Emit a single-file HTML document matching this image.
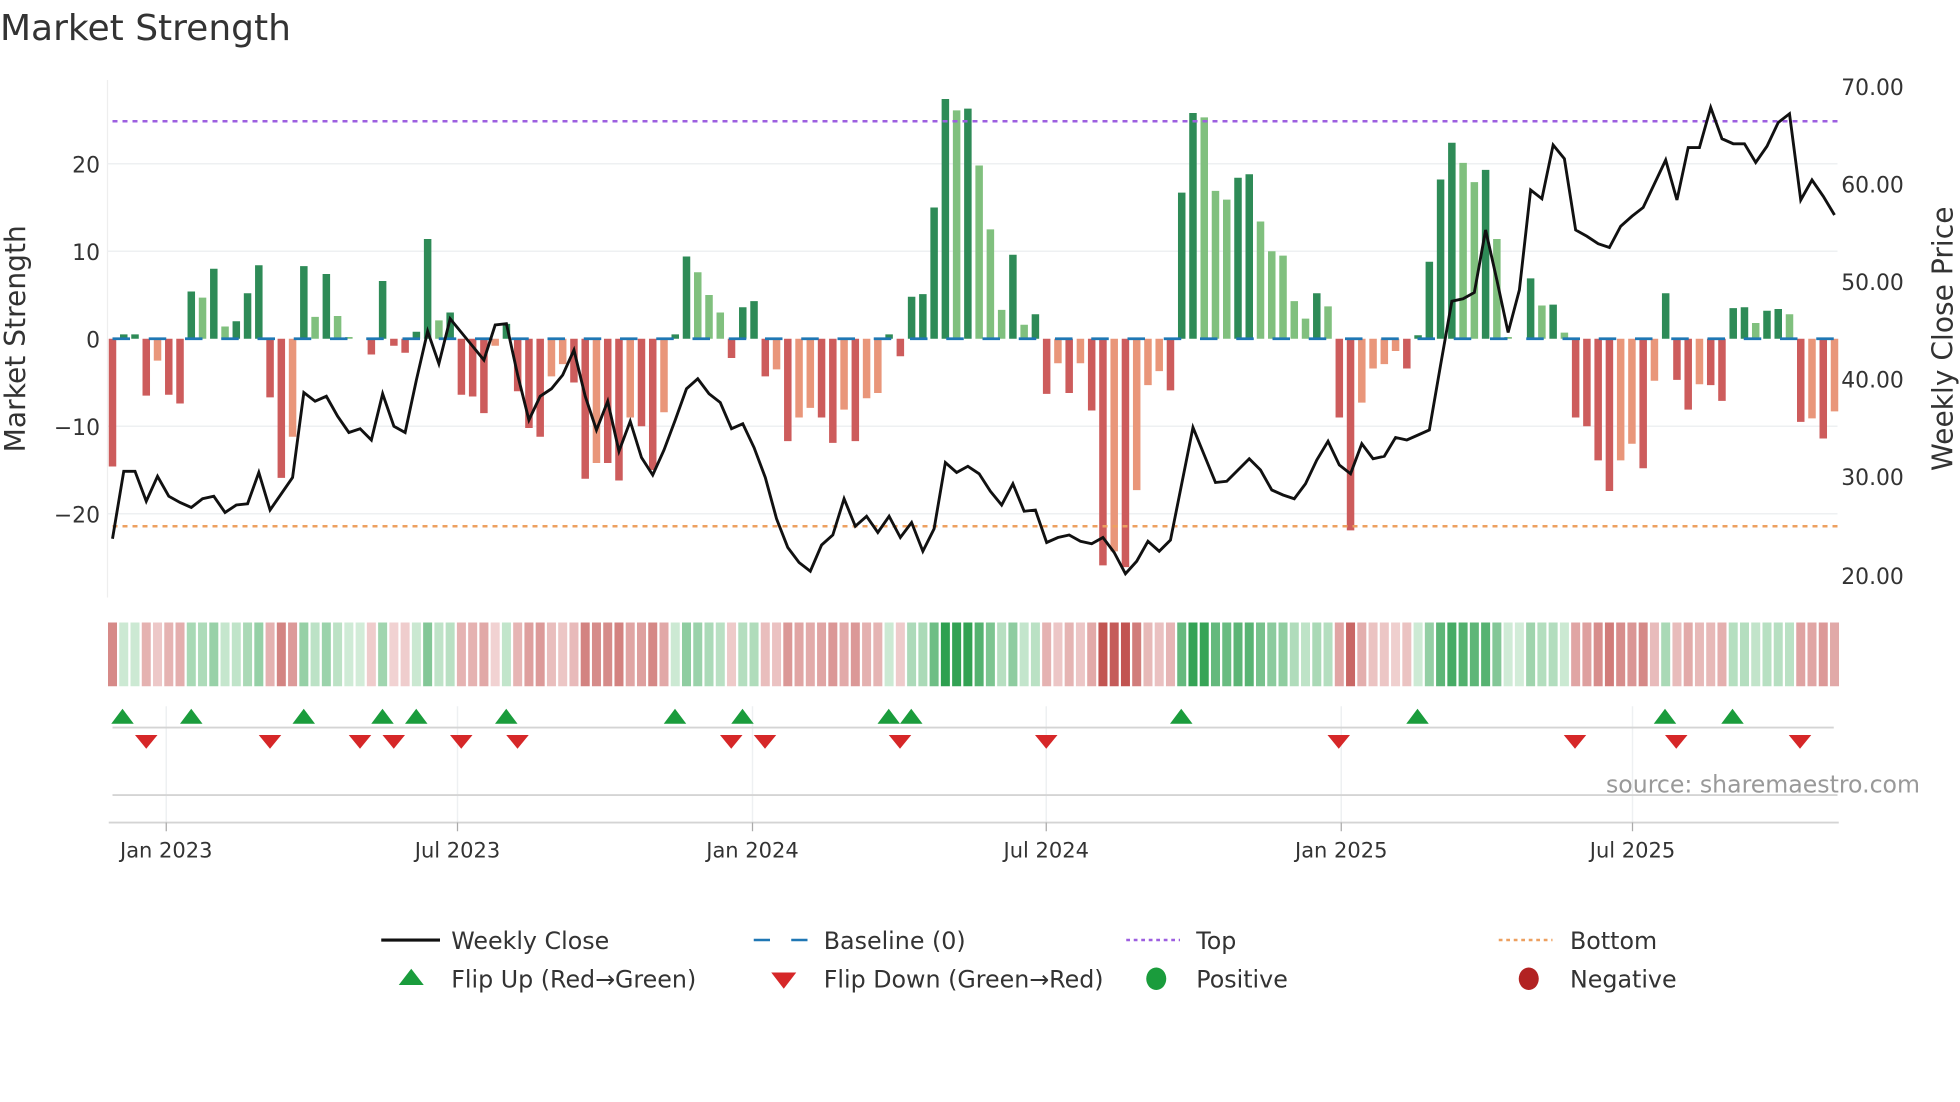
<!DOCTYPE html>
<html><head><meta charset="utf-8"><style>
html,body{margin:0;padding:0;background:#fff;width:1960px;height:1102px;overflow:hidden}
svg{display:block}
text{font-family:"DejaVu Sans","Liberation Sans",sans-serif;fill:#333}
</style></head><body>
<svg id="s" width="1960" height="1102" viewBox="0 0 1568 881.6" xmlns="http://www.w3.org/2000/svg">
<text x="0" y="32" font-size="28.8">Market Strength</text>
<line x1="86" y1="64" x2="86" y2="478" stroke="#eee" stroke-width="1"/>
<g stroke="#eef0f2" stroke-width="1.2">
<line x1="86" y1="131" x2="1470" y2="131"/><line x1="86" y1="201" x2="1470" y2="201"/><line x1="86" y1="341" x2="1470" y2="341"/><line x1="86" y1="411" x2="1470" y2="411"/>
</g>
<g font-size="17.5" text-anchor="end">
<text x="80" y="138">20</text><text x="80" y="208">10</text><text x="80" y="278">0</text><text x="80" y="348">−10</text><text x="80" y="418">−20</text>
</g>
<g font-size="17.5">
<text x="1473" y="76">70.00</text><text x="1473" y="154">60.00</text><text x="1473" y="232">50.00</text><text x="1473" y="310">40.00</text><text x="1473" y="388">30.00</text><text x="1473" y="467">20.00</text>
</g>
<text font-size="22.5" transform="translate(20,271) rotate(-90)" text-anchor="middle">Market Strength</text>
<text font-size="22.5" transform="translate(1562,271) rotate(-90)" text-anchor="middle">Weekly Close Price</text>
<g id="bars"></g>
<line x1="90" y1="97" x2="1470" y2="97" stroke="#9d5fe0" stroke-width="2" stroke-dasharray="4,4"/>
<line x1="90" y1="421" x2="1470" y2="421" stroke="#eda060" stroke-width="2" stroke-dasharray="4,4"/>
<g id="strip"></g>
<g stroke="#eef0f2" stroke-width="1.2">
<line x1="133" y1="565" x2="133" y2="658"/><line x1="366" y1="565" x2="366" y2="658"/><line x1="602" y1="565" x2="602" y2="658"/><line x1="837" y1="565" x2="837" y2="658"/><line x1="1073" y1="565" x2="1073" y2="658"/><line x1="1306" y1="565" x2="1306" y2="658"/>
</g>
<line x1="90" y1="582" x2="1467" y2="582" stroke="#d4d4d4" stroke-width="1.5"/>
<line x1="90" y1="636" x2="1470" y2="636" stroke="#d4d4d4" stroke-width="1.5"/>
<line x1="87" y1="658" x2="1471" y2="658" stroke="#d4d4d4" stroke-width="1.5"/>
<g stroke="#aaa" stroke-width="1">
<line x1="133" y1="658" x2="133" y2="665"/><line x1="366" y1="658" x2="366" y2="665"/><line x1="602" y1="658" x2="602" y2="665"/><line x1="837" y1="658" x2="837" y2="665"/><line x1="1073" y1="658" x2="1073" y2="665"/><line x1="1306" y1="658" x2="1306" y2="665"/>
</g>
<g id="tri"></g>
<g font-size="16.8" text-anchor="middle">
<text x="133" y="686">Jan 2023</text><text x="366" y="686">Jul 2023</text><text x="602" y="686">Jan 2024</text><text x="837" y="686">Jul 2024</text><text x="1073" y="686">Jan 2025</text><text x="1306" y="686">Jul 2025</text>
</g>
<text x="1536" y="634" font-size="18.9" text-anchor="end" style="fill:#999">source: sharemaestro.com</text>
<g font-size="19">
<line x1="305" y1="752" x2="352" y2="752" stroke="#111" stroke-width="2.5"/><text x="361" y="759">Weekly Close</text>
<line x1="603" y1="752" x2="646" y2="752" stroke="#1f77b4" stroke-width="2" stroke-dasharray="13,17"/><text x="659" y="759">Baseline (0)</text>
<line x1="901" y1="752" x2="944" y2="752" stroke="#9d5fe0" stroke-width="2" stroke-dasharray="3,3"/><text x="957" y="759">Top</text>
<line x1="1199" y1="752" x2="1242" y2="752" stroke="#eda060" stroke-width="2" stroke-dasharray="3,3"/><text x="1256" y="759">Bottom</text>
<polygon points="319,788 339,788 329,775" fill="#1a9c3c"/><text x="361" y="790">Flip Up (Red→Green)</text>
<polygon points="617,778 637,778 627,791" fill="#d62728"/><text x="659" y="790">Flip Down (Green→Red)</text>
<ellipse cx="925" cy="783" rx="8" ry="9" fill="#1a9c3c"/><text x="957" y="790">Positive</text>
<ellipse cx="1223" cy="783" rx="8" ry="9" fill="#b22222"/><text x="1256" y="790">Negative</text>
</g>
<polyline id="pl" fill="none" stroke="#111" stroke-width="2.3" stroke-linejoin="miter"/>
</svg>
<script>
var V=[[-14.6,'R'],[0.5,'D'],[0.5,'D'],[-6.5,'R'],[-2.5,'O'],[-6.4,'R'],[-7.4,'R'],[5.4,'D'],[4.7,'L'],[8,'D'],[1.4,'L'],[2,'D'],[5.2,'D'],[8.4,'D'],[-6.7,'R'],[-15.9,'R'],[-11.2,'O'],[8.3,'D'],[2.5,'L'],[7.4,'D'],[2.6,'L'],[0.2,'L'],[0,'L'],[-1.8,'R'],[6.6,'D'],[-0.8,'R'],[-1.6,'R'],[0.8,'D'],[11.4,'D'],[2.1,'L'],[3,'D'],[-6.4,'R'],[-6.6,'R'],[-8.5,'R'],[-0.8,'O'],[1.7,'D'],[-6,'R'],[-10.2,'R'],[-11.2,'R'],[-4.3,'O'],[-2.9,'O'],[-5,'R'],[-16,'R'],[-14.2,'O'],[-14.2,'R'],[-16.2,'R'],[-9,'O'],[-10,'R'],[-15,'R'],[-8.4,'O'],[0.5,'D'],[9.4,'D'],[7.6,'L'],[5,'L'],[3,'L'],[-2.2,'R'],[3.6,'D'],[4.3,'D'],[-4.3,'R'],[-3.5,'O'],[-11.7,'R'],[-9,'O'],[-7.9,'O'],[-9,'R'],[-11.9,'R'],[-8.1,'O'],[-11.7,'R'],[-6.8,'O'],[-6.2,'O'],[0.5,'D'],[-2,'R'],[4.8,'D'],[5.1,'D'],[15,'D'],[27.4,'D'],[26.1,'L'],[26.3,'D'],[19.8,'L'],[12.5,'L'],[3.3,'L'],[9.6,'D'],[1.6,'L'],[2.8,'D'],[-6.3,'R'],[-2.8,'O'],[-6.2,'R'],[-2.8,'O'],[-8.2,'R'],[-25.9,'R'],[-24.3,'O'],[-26.1,'R'],[-17.3,'O'],[-5.3,'O'],[-3.7,'O'],[-5.9,'R'],[16.7,'D'],[25.8,'D'],[25.3,'L'],[16.9,'L'],[15.9,'L'],[18.4,'D'],[18.8,'D'],[13.4,'L'],[10,'L'],[9.5,'L'],[4.3,'L'],[2.3,'L'],[5.2,'D'],[3.7,'L'],[-9,'R'],[-21.9,'R'],[-7.3,'O'],[-3.4,'O'],[-2.9,'O'],[-1.4,'O'],[-3.4,'R'],[0.4,'D'],[8.8,'D'],[18.2,'D'],[22.4,'D'],[20.1,'L'],[17.9,'L'],[19.3,'D'],[11.4,'L'],[0.2,'L'],[0,'L'],[6.9,'D'],[3.8,'L'],[3.9,'D'],[0.7,'L'],[-9,'R'],[-10,'R'],[-13.9,'R'],[-17.4,'R'],[-13.9,'O'],[-12,'O'],[-14.8,'R'],[-4.8,'O'],[5.2,'D'],[-4.7,'R'],[-8.1,'R'],[-5.2,'O'],[-5.3,'R'],[-7.1,'R'],[3.5,'D'],[3.6,'D'],[1.8,'L'],[3.2,'D'],[3.4,'D'],[2.8,'L'],[-9.5,'R'],[-9.1,'O'],[-11.4,'R'],[-8.3,'O']];
var C={D:'#2e8b57',L:'#80c07e',R:'#cd5c5c',O:'#e9967a'};
var P=9.004,X0=90,b='',s='';
function mix(a,c,t){return 'rgb('+a.map(function(v,i){return Math.round(v+(c[i]-v)*t)}).join(',')+')';}
V.forEach(function(d,i){var x=X0+i*P,v=d[0],h=Math.abs(v)*7;
 if(h>0.3){var y=v>0?271-h:271;b+='<rect x="'+(x-3).toFixed(2)+'" y="'+y.toFixed(2)+'" width="6" height="'+h.toFixed(2)+'" fill="'+C[d[1]]+'"/>';}
 var t=Math.min(Math.abs(v)/27,1),col;
 if(v>=0)col=mix([210,236,216],[46,160,80],Math.pow(t,0.85));else col=mix([243,216,216],[192,80,77],Math.pow(t,0.9));
 s+='<rect x="'+(x-3.6).toFixed(2)+'" y="498" width="7.2" height="51" fill="'+col+'"/>';});
b+='<line x1="90" y1="271" x2="1467" y2="271" stroke="#1f77b4" stroke-width="2.2" stroke-dasharray="14,15"/>';
document.getElementById('bars').innerHTML=b;
document.getElementById('strip').innerHTML=s;
var L=[431,377,377,401,381,397,402,406,399,397,410,404,403,378,408,395,382,314,321,317,333,346,343,352,315,341,346,304,265,291,255,266,277,288,260,259,300,336,317,311,300,280,317,344,321,361,337,366,380,360,336,311,303,315,322,343,339,358,382,415,438,450,457,436,428,399,421,413,426,413,430,418,441,423,370,378,373,379,393,404,387,409,408,434,430,428,433,435,430,442,459,449,433,441,432,387,342,364,386,385,376,367,376,392,396,399,387,368,353,372,379,355,367,365,350,352,348,344,292,241,239,234,184,224,266,232,152,159,116,127,184,189,195,198,181,173,166,147,128,160,118,118,86,111,115,115,130,117,98,91,160,144,157,172];
document.getElementById('pl').setAttribute('points',L.map(function(y,i){return (X0+i*P).toFixed(2)+','+y}).join(' '));
var U=[98,153,243,306,333,405,540,594,711,729,945,1134,1332,1386],D=[117,216,288,315,369,414,585,612,720,837,1071,1260,1341,1440],t='';
U.forEach(function(x){t+='<polygon points="'+(x-9)+',579 '+(x+9)+',579 '+x+',567" fill="#1a9c3c"/>';});
D.forEach(function(x){t+='<polygon points="'+(x-9)+',588 '+(x+9)+',588 '+x+',599" fill="#d62728"/>';});
document.getElementById('tri').innerHTML=t;
</script>
</body></html>
